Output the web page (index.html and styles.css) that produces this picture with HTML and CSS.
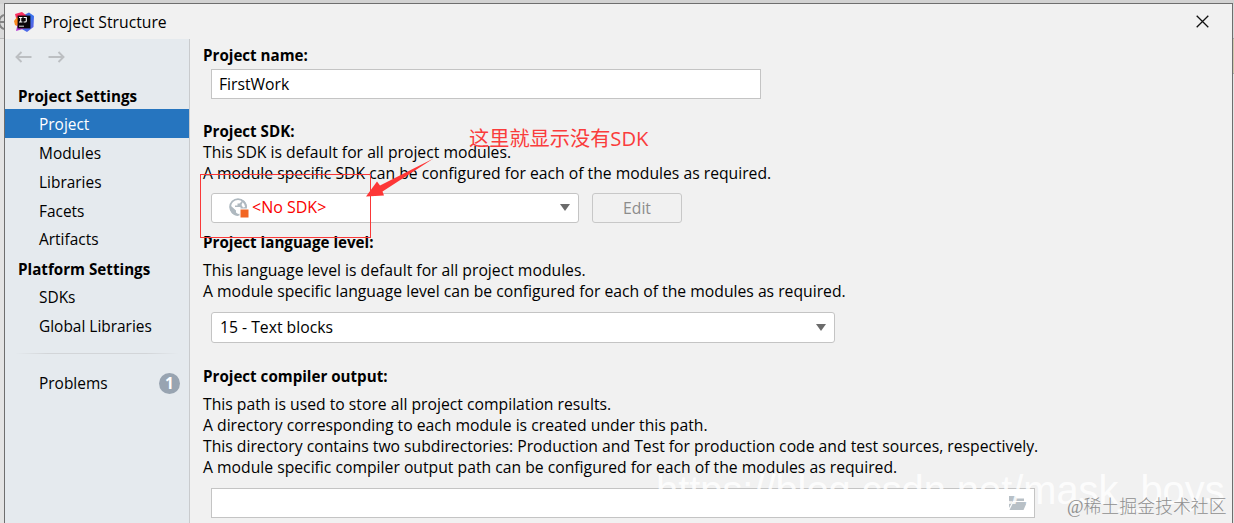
FILE: index.html
```html
<!DOCTYPE html>
<html lang="en">
<head>
    <meta charset="UTF-8">
    <meta name="viewport" content="width=device-width, initial-scale=1.0">
    <title>Project Structure</title>
    <link rel="stylesheet" href="styles.css">
</head>
<body>
    <div class="backdrop">
        <svg class="backdrop-icon" width="4" height="20" viewBox="0 0 4 20">
            <path d="M4 3A7.5 7.5 0 0 0 4 17M0 10H4" fill="none" stroke="#858585" stroke-width="2"/>
        </svg>
        <span class="backdrop-strip"></span>
    </div>
    <div class="window">
        <header class="titlebar">
            <svg class="logo" width="20" height="20" viewBox="0 0 20 20">
                <defs>
                    <linearGradient id="blue" x1="0" y1="0" x2="1" y2="1">
                        <stop offset="0" stop-color="#4a55c8"/>
                        <stop offset="0.5" stop-color="#3a74ee"/>
                        <stop offset="1" stop-color="#6a5be0"/>
                    </linearGradient>
                </defs>
                <path d="M10 3L15 0.5L20 4L19.5 15L13 20L6 16Z" fill="url(#blue)"/>
                <path d="M1 2L8 0L13 4L8 12L3 10Z" fill="#fb2f61"/>
                <path d="M0 9L3 5L8 10L5 15L1 13Z" fill="#f98a1f"/>
                <path d="M2 19L4 11L14 16L9 17Z" fill="#b23bd0"/>
                <rect x="3.6" y="3.6" width="12.8" height="12.8" fill="#0b0508"/>
                <path d="M5 5.5H8.4M6.7 5.5V10M5 10H8.4M9.6 5.5H12.3V9Q12.3 10 11 10H9.6" fill="none" stroke="#fff" stroke-width="1.1"/>
                <path d="M5 14.2H10" stroke="#ddd" stroke-width="1"/>
            </svg>
            <span class="title">Project Structure</span>
            <svg class="close" width="13" height="13" viewBox="0 0 13 13">
                <path d="M0.7 0.7L12.3 12.3M12.3 0.7L0.7 12.3" stroke="#111" stroke-width="1.3"/>
            </svg>
        </header>
        <div class="body">
            <nav class="sidebar">
                <div class="history">
                    <svg width="17" height="12" viewBox="0 0 17 12">
                        <path d="M16.5 6H1.5M6.5 1L1.5 6L6.5 11" fill="none" stroke="#bcbfc2" stroke-width="1.9"/>
                    </svg>
                    <svg width="17" height="12" viewBox="0 0 17 12">
                        <path d="M0.5 6H15.5M10.5 1L15.5 6L10.5 11" fill="none" stroke="#bcbfc2" stroke-width="1.9"/>
                    </svg>
                </div>
                <div class="group">Project Settings</div>
                <div class="item selected">Project</div>
                <div class="item">Modules</div>
                <div class="item">Libraries</div>
                <div class="item">Facets</div>
                <div class="item">Artifacts</div>
                <div class="group">Platform Settings</div>
                <div class="item">SDKs</div>
                <div class="item">Global Libraries</div>
                <div class="separator"></div>
                <div class="item problems">Problems <span class="count">1</span></div>
            </nav>
            <main class="content">
                <section class="name">
                    <h2>Project name:</h2>
                    <div class="field name-field">FirstWork</div>
                </section>
                <section class="sdk">
                    <h2>Project SDK:</h2>
                    <p>This SDK is default for all project modules.</p>
                    <p>A module specific SDK can be configured for each of the modules as required.</p>
                    <div class="controls">
                        <div class="select sdk-select">
                            <svg width="20" height="20" viewBox="0 0 20 20">
                                <circle cx="9" cy="9" r="7.9" fill="#fff" stroke="#afb9c0" stroke-width="1.7"/>
                                <path d="M1 7L7 12.5V14.5L9 16V18A9 9 0 0 1 1 7Z" fill="#afb9c0"/>
                                <path d="M11 1L12.5 3.5L10.5 5.5H8.5V7.5H6V9H11.5V12H17.5L18 8A9 9 0 0 0 11 1Z" fill="#afb9c0"/>
                                <path d="M13.6 4.2Q16 6 16.2 9L14 9.5L12.5 7Z" fill="#fff"/>
                                <rect x="10.5" y="10.5" width="9" height="9" fill="#fff"/>
                                <rect x="11.5" y="11.5" width="8" height="8" fill="#f26522"/>
                            </svg>
                            <span class="no-sdk">&lt;No SDK&gt;</span>
                            <span class="caret"></span>
                        </div>
                        <div class="button">Edit</div>
                    </div>
                </section>
                <section class="level">
                    <h2>Project language level:</h2>
                    <p>This language level is default for all project modules.</p>
                    <p>A module specific language level can be configured for each of the modules as required.</p>
                    <div class="select level-select">
                        <span>15 - Text blocks</span>
                        <span class="caret"></span>
                    </div>
                </section>
                <section class="output">
                    <h2>Project compiler output:</h2>
                    <p>This path is used to store all project compilation results.</p>
                    <p>A directory corresponding to each module is created under this path.</p>
                    <p>This directory contains two subdirectories: Production and Test for production code and test sources, respectively.</p>
                    <p>A module specific compiler output path can be configured for each of the modules as required.</p>
                    <div class="field output-field">
                        <svg width="18" height="14" viewBox="0 0 18 14">
                            <path d="M0 0H6L8 2.5H15V5H4L0 12Z" fill="#b8c0c6"/>
                            <path d="M4.5 6H18L14.5 14H0.5Z" fill="#b8c0c6"/>
                        </svg>
                    </div>
                </section>
            </main>
        </div>
    </div>

    <!-- notes drawn over the dialog -->
    <div class="mark-box"></div>
    <svg class="mark-arrow" width="70" height="40" viewBox="0 0 70 40">
        <path d="M0 38.5L11 23.5L14 27.5L67.5 0.5L16.5 33.5L18 37.5Z" fill="#fd3636"/>
    </svg>
    <div class="mark-text">这里就显示没有SDK</div>
    <div class="watermark-url">https://blog.csdn.net/mask_boys</div>
    <div class="watermark-site">@稀土掘金技术社区</div>
</body>
</html>
```
FILE: styles.css
```css
* {
    box-sizing: border-box;
}
body {
    margin: 0;
    height: 523px;
    position: relative;
    overflow: hidden;
    background-color: #d9d9d9;
    font-family: "Open Sans", "Noto Sans", "Noto Sans CJK SC", sans-serif;
    font-size: 15.73px;
    color: #000;
}
.backdrop {
    position: absolute;
    inset: 0;
    background: linear-gradient(#d2d2d2 0 4px, #dadada 4px 38px, #bbb 38px 39px, #e4e4e4 39px);
}
.backdrop-icon {
    position: absolute;
    left: 0;
    top: 12px;
}
.backdrop-strip {
    position: absolute;
    right: 0;
    top: 38px;
    width: 2px;
    height: 36px;
    background-color: #cfc8ae;
    border: solid #aaa;
    border-width: 1px 0;
}
.window {
    position: relative;
    display: flex;
    flex-direction: column;
    width: 1229px;
    height: 520px;
    margin: 0 0 0 4px;
    top: 3px;
    background-color: #f1f1f1;
    border: 1px solid #6e6e6e;
    border-bottom: 0;
}
.titlebar {
    display: flex;
    align-items: center;
    height: 35px;
    flex: none;
    padding: 0 23px 0 9px;
}
.title {
    margin-left: 9px;
}
.close {
    margin-left: auto;
}
.body {
    display: flex;
    flex: 1;
    min-height: 0;
}
.sidebar {
    width: 185px;
    flex: none;
    font-size: 15.45px;
    background-color: #e5eaee;
    border-right: 1px solid #c9cbcd;
}
.history {
    display: flex;
    align-items: center;
    gap: 16px;
    height: 36px;
    margin-bottom: 5px;
    padding-left: 10px;
}
.group,
.item {
    height: 28.8px;
    line-height: 28.8px;
    white-space: nowrap;
}
.group {
    padding: 2px 0 0 13px;
    font-size: 15.2px;
    font-weight: bold;
}
.item {
    padding: 1.5px 0 0 34px;
}
.selected {
    background-color: #2675bf;
    color: #fff;
}
.separator {
    height: 1px;
    margin: 14px 10px 14px;
    background: linear-gradient(90deg, transparent, #d2d5d8 20%, #d2d5d8 80%, transparent);
}
.problems {
    display: flex;
    align-items: center;
    justify-content: space-between;
    padding-right: 9px;
}
.count {
    width: 21px;
    height: 21px;
    line-height: 21px;
    border-radius: 50%;
    background-color: #98a4b1;
    color: #fff;
    font-weight: bold;
    text-align: center;
}
.content {
    flex: 1;
    padding: 6px 0 0 13px;
    white-space: nowrap;
}
h2,
p {
    margin: 0;
    font-size: inherit;
    line-height: 21.2px;
}
h2 {
    font-size: 15.15px;
}
.field,
.select {
    display: flex;
    align-items: center;
    height: 30px;
    margin-left: 8px;
    background-color: #fff;
    border: 1px solid #c4c4c4;
}
.select {
    border-radius: 3px;
    padding: 0 8px;
}
.name {
    height: 76px;
}
.name-field {
    width: 550px;
    margin-top: 3px;
    padding: 0 0 1px 7px;
}
.sdk {
    height: 111px;
}
.controls {
    display: flex;
    gap: 13px;
    margin-top: 8px;
}
.sdk-select {
    width: 368px;
    padding-left: 17px;
}
.no-sdk {
    margin-left: 3px;
    padding-bottom: 1px;
    font-size: 16px;
    color: #fa0000;
}
.caret {
    margin-left: auto;
    border: solid transparent;
    border-width: 7px 5.5px 0;
    border-top-color: #6b6b6b;
}
.button {
    width: 90px;
    height: 30px;
    line-height: 29px;
    border: 1px solid #c8c8c8;
    border-radius: 3px;
    color: #8c8c8c;
    text-align: center;
}
.level {
    height: 134px;
}
.level h2,
.output h2 {
    margin-bottom: 6.4px;
}
.level-select {
    width: 624px;
    height: 31px;
    margin-top: 9.6px;
}
.output-field {
    width: 824px;
    margin-top: 9.6px;
    padding-right: 7px;
    justify-content: flex-end;
}
.mark-box {
    position: absolute;
    left: 200px;
    top: 174px;
    width: 171px;
    height: 64px;
    border: 1px solid #f93838;
}
.mark-arrow {
    position: absolute;
    left: 366px;
    top: 158px;
}
.mark-text {
    position: absolute;
    left: 469px;
    top: 123px;
    font-family: "Open Sans", "Noto Sans CJK SC", sans-serif;
    font-size: 20.2px;
    line-height: 30px;
    color: #fa3c3c;
    white-space: nowrap;
}
.watermark-url {
    position: absolute;
    left: 656px;
    top: 468px;
    font-family: "Liberation Sans", Arial, sans-serif;
    font-size: 39.8px;
    line-height: 44px;
    color: rgba(255, 255, 255, 0.85);
    white-space: nowrap;
}
.watermark-site {
    position: absolute;
    left: 1067px;
    top: 494px;
    font-family: "Liberation Serif", "Noto Sans CJK SC", serif;
    font-size: 17.9px;
    line-height: 26px;
    font-weight: 300;
    color: #8f8f8f;
    white-space: nowrap;
}
```
